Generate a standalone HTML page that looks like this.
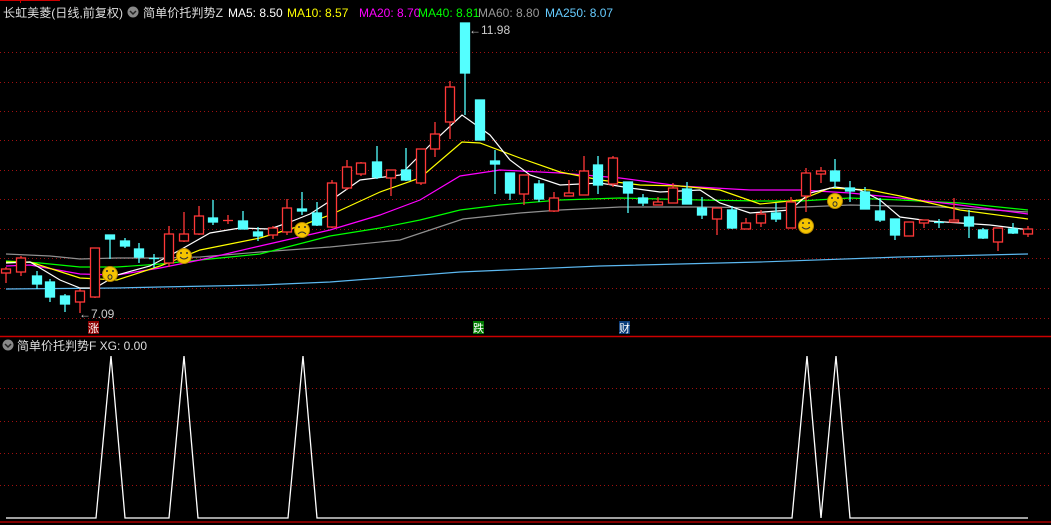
<!DOCTYPE html>
<html><head><meta charset="utf-8"><style>
html,body{margin:0;padding:0;background:#000;width:1051px;height:525px;overflow:hidden}
svg{display:block}
text{font-family:"Liberation Sans","Noto Sans CJK SC",sans-serif}
</style></head><body>
<svg width="1051" height="525" viewBox="0 0 1051 525" xmlns="http://www.w3.org/2000/svg">
<rect width="1051" height="525" fill="#000"/>
<line x1="0" y1="0.5" x2="60" y2="0.5" stroke="#c00" stroke-width="1"/>
<line x1="20.5" y1="0" x2="20.5" y2="3" stroke="#c00"/>
<g stroke="#a01010" stroke-width="1" stroke-dasharray="1,3">
<line x1="0" y1="52.5" x2="1051" y2="52.5"/><line x1="0" y1="82.5" x2="1051" y2="82.5"/>
<line x1="0" y1="111.5" x2="1051" y2="111.5"/><line x1="0" y1="140.5" x2="1051" y2="140.5"/>
<line x1="0" y1="170.5" x2="1051" y2="170.5"/><line x1="0" y1="199.5" x2="1051" y2="199.5"/>
<line x1="0" y1="229.5" x2="1051" y2="229.5"/><line x1="0" y1="258.5" x2="1051" y2="258.5"/>
<line x1="0" y1="288.5" x2="1051" y2="288.5"/><line x1="0" y1="318.5" x2="1051" y2="318.5"/>
<line x1="0" y1="388.5" x2="1051" y2="388.5"/><line x1="0" y1="421.5" x2="1051" y2="421.5"/>
<line x1="0" y1="453.5" x2="1051" y2="453.5"/><line x1="0" y1="485.5" x2="1051" y2="485.5"/>
</g>
<line x1="0" y1="336.5" x2="1051" y2="336.5" stroke="#c00" stroke-width="1.5"/>
<line x1="0" y1="522" x2="1051" y2="522" stroke="#a00" stroke-width="1.5"/>

<text x="3" y="17" font-size="12" fill="#ddd" textLength="120" lengthAdjust="spacingAndGlyphs">长虹美菱(日线,前复权)</text>
<circle cx="133" cy="12" r="5.5" fill="#888"/><path d="M130 11l3 3 3-3" stroke="#222" stroke-width="1.5" fill="none"/>
<text x="143" y="17" font-size="12" fill="#ddd" textLength="80" lengthAdjust="spacingAndGlyphs">简单价托判势Z</text>
<text x="228" y="17" font-size="12" fill="#fff">MA5: 8.50</text>
<text x="287" y="17" font-size="12" fill="#ff0">MA10: 8.57</text>
<text x="359" y="17" font-size="12" fill="#f0f">MA20: 8.70</text>
<text x="418" y="17" font-size="12" fill="#0f0">MA40: 8.81</text>
<text x="478" y="17" font-size="12" fill="#999">MA60: 8.80</text>
<text x="545" y="17" font-size="12" fill="#6cf">MA250: 8.07</text>

<g fill="none" stroke-width="1.2">
<polyline stroke="#5cb8f0" points="6,289 117,288 160,287 260,285 330,282 460,272 600,266 760,262 900,257 1028,254"/>
<polyline stroke="#909090" points="6,254 50,256 80,259 117,258 160,258 200,257 260,252 330,247 400,240 463,219 520,213 560,210 620,207 700,207 780,208 850,205 940,207 1028,212"/>
<polyline stroke="#00ff00" points="6,261 40,263 80,267 117,267 160,264 200,260 260,254 330,236 380,228 420,220 460,210 500,205 560,200 620,198 700,200 760,201 800,201 850,198 900,200 960,203 1028,210"/>
<polyline stroke="#ff00ff" points="6,266 30,265 80,274 117,275 160,268 200,260 260,246 330,230 380,215 420,200 460,176 500,170 560,173 620,178 680,186 750,190 800,190 850,193 900,198 960,205 1028,214"/>
<polyline stroke="#ffff00" points="6,262 30,262 80,278 117,280 160,266 200,250 260,238 300,226 330,215 380,192 420,178 462,142 480,143 520,158 560,172 600,180 640,185 680,186 720,190 760,204 800,200 830,188 870,190 900,196 960,210 1028,219"/>
<polyline stroke="#ffffff" points="6,263 30,262 60,280 80,288 95,288 117,275 150,266 180,250 210,233 240,228 270,229 290,222 310,214 330,201 360,180 400,175 430,145 462,115 490,135 510,160 530,175 560,185 600,183 630,188 660,192 700,190 720,203 750,213 790,210 810,193 835,187 860,190 880,200 900,217 930,221 960,223 990,225 1030,230"/>
</g>

<g stroke="#ff3838" stroke-width="1.3" fill="#000">
<line x1="6" y1="267" x2="6" y2="283"/><rect x="1.5" y="269" width="9" height="4"/>
<line x1="21" y1="256" x2="21" y2="276"/><rect x="16.5" y="258" width="9" height="14"/>
<line x1="80" y1="289" x2="80" y2="313"/><rect x="75.5" y="291" width="9" height="11"/>
<line x1="95" y1="248" x2="95" y2="298"/><rect x="90.5" y="248" width="9" height="49"/>
<line x1="169" y1="226" x2="169" y2="267"/><rect x="164.5" y="234" width="9" height="29"/>
<line x1="184" y1="212" x2="184" y2="242"/><rect x="179.5" y="234" width="9" height="7"/>
<line x1="199" y1="206" x2="199" y2="235"/><rect x="194.5" y="216" width="9" height="18"/>
<line x1="228" y1="215" x2="228" y2="224"/><line x1="223" y1="220.5" x2="233" y2="220.5"/>
<line x1="273" y1="226" x2="273" y2="239"/><rect x="268.5" y="228" width="9" height="7"/>
<line x1="287" y1="199" x2="287" y2="235"/><rect x="282.5" y="208" width="9" height="24"/>
<line x1="332" y1="180" x2="332" y2="228"/><rect x="327.5" y="183" width="9" height="44"/>
<line x1="347" y1="160" x2="347" y2="190"/><rect x="342.5" y="167" width="9" height="21"/>
<line x1="361" y1="162" x2="361" y2="176"/><rect x="356.5" y="163" width="9" height="11"/>
<line x1="391" y1="170" x2="391" y2="196"/><rect x="386.5" y="170" width="9" height="8"/>
<line x1="421" y1="149" x2="421" y2="185"/><rect x="416.5" y="149" width="9" height="34"/>
<line x1="435" y1="122" x2="435" y2="157"/><rect x="430.5" y="134" width="9" height="15"/>
<line x1="450" y1="81" x2="450" y2="139"/><rect x="445.5" y="87" width="9" height="35"/>
<line x1="524" y1="175" x2="524" y2="205"/><rect x="519.5" y="175" width="9" height="19"/>
<line x1="554" y1="192" x2="554" y2="212"/><rect x="549.5" y="198" width="9" height="13"/>
<line x1="569" y1="180" x2="569" y2="196"/><rect x="564.5" y="193" width="9" height="3"/>
<line x1="584" y1="156" x2="584" y2="195"/><rect x="579.5" y="171" width="9" height="24"/>
<line x1="613" y1="156" x2="613" y2="187"/><rect x="608.5" y="158" width="9" height="26"/>
<line x1="658" y1="197" x2="658" y2="205"/><rect x="653.5" y="202" width="9" height="3"/>
<line x1="673" y1="183" x2="673" y2="203"/><rect x="668.5" y="188" width="9" height="15"/>
<line x1="717" y1="208" x2="717" y2="235"/><rect x="712.5" y="208" width="9" height="11"/>
<line x1="746" y1="218" x2="746" y2="229"/><rect x="741.5" y="223" width="9" height="6"/>
<line x1="761" y1="210" x2="761" y2="227"/><rect x="756.5" y="214" width="9" height="9"/>
<line x1="791" y1="197" x2="791" y2="228"/><rect x="786.5" y="202" width="9" height="26"/>
<line x1="806" y1="168" x2="806" y2="212"/><rect x="801.5" y="173" width="9" height="23"/>
<line x1="821" y1="167" x2="821" y2="183"/><rect x="816.5" y="171" width="9" height="3"/>
<rect x="904.5" y="222" width="9" height="14"/>
<line x1="924" y1="220" x2="924" y2="228"/><rect x="919.5" y="220" width="9" height="3"/>
<line x1="954" y1="198" x2="954" y2="222"/><rect x="949.5" y="220" width="9" height="2"/>
<line x1="998" y1="228" x2="998" y2="251"/><rect x="993.5" y="228" width="9" height="14"/>
<line x1="1028" y1="226" x2="1028" y2="237"/><rect x="1023.5" y="229" width="9" height="5"/>
</g>
<g stroke="#54ffff" stroke-width="1.3" fill="#54ffff">
<line x1="37" y1="271" x2="37" y2="289"/><rect x="32.5" y="276" width="9" height="8"/>
<line x1="50" y1="279" x2="50" y2="302"/><rect x="45.5" y="282" width="9" height="15"/>
<line x1="65" y1="294" x2="65" y2="312"/><rect x="60.5" y="296" width="9" height="8"/>
<line x1="110" y1="235" x2="110" y2="259"/><rect x="105.5" y="235" width="9" height="4"/>
<line x1="125" y1="238" x2="125" y2="248"/><rect x="120.5" y="241" width="9" height="5"/>
<line x1="139" y1="243" x2="139" y2="263"/><rect x="134.5" y="249" width="9" height="8"/>
<line x1="154" y1="254" x2="154" y2="268"/><line x1="149" y1="258.5" x2="159" y2="258.5"/>
<line x1="213" y1="200" x2="213" y2="225"/><rect x="208.5" y="218" width="9" height="4"/>
<line x1="243" y1="211" x2="243" y2="229"/><rect x="238.5" y="221" width="9" height="8"/>
<line x1="258" y1="227" x2="258" y2="241"/><rect x="253.5" y="232" width="9" height="4"/>
<line x1="302" y1="192" x2="302" y2="215"/><rect x="297.5" y="209" width="9" height="2"/>
<line x1="317" y1="202" x2="317" y2="226"/><rect x="312.5" y="213" width="9" height="12"/>
<line x1="377" y1="146" x2="377" y2="179"/><rect x="372.5" y="162" width="9" height="15"/>
<line x1="406" y1="148" x2="406" y2="181"/><rect x="401.5" y="170" width="9" height="10"/>
<line x1="465" y1="23" x2="465" y2="115"/><rect x="460.5" y="23" width="9" height="50"/>
<rect x="475.5" y="100" width="9" height="40"/>
<line x1="495" y1="150" x2="495" y2="194"/><rect x="490.5" y="161" width="9" height="3"/>
<line x1="510" y1="173" x2="510" y2="200"/><rect x="505.5" y="173" width="9" height="20"/>
<line x1="539" y1="180" x2="539" y2="202"/><rect x="534.5" y="184" width="9" height="15"/>
<line x1="598" y1="156" x2="598" y2="194"/><rect x="593.5" y="165" width="9" height="20"/>
<line x1="628" y1="182" x2="628" y2="213"/><rect x="623.5" y="182" width="9" height="11"/>
<line x1="643" y1="194" x2="643" y2="206"/><rect x="638.5" y="198" width="9" height="5"/>
<line x1="687" y1="182" x2="687" y2="204"/><rect x="682.5" y="189" width="9" height="15"/>
<line x1="702" y1="197" x2="702" y2="219"/><rect x="697.5" y="208" width="9" height="7"/>
<line x1="732" y1="206" x2="732" y2="229"/><rect x="727.5" y="210" width="9" height="18"/>
<line x1="776" y1="203" x2="776" y2="222"/><rect x="771.5" y="213" width="9" height="6"/>
<line x1="835" y1="159" x2="835" y2="188"/><rect x="830.5" y="171" width="9" height="10"/>
<line x1="850" y1="181" x2="850" y2="202"/><rect x="845.5" y="188" width="9" height="3"/>
<line x1="865" y1="187" x2="865" y2="209"/><rect x="860.5" y="192" width="9" height="17"/>
<line x1="880" y1="198" x2="880" y2="222"/><rect x="875.5" y="211" width="9" height="9"/>
<line x1="895" y1="219" x2="895" y2="240"/><rect x="890.5" y="219" width="9" height="16"/>
<line x1="939" y1="219" x2="939" y2="228"/><line x1="934" y1="222.5" x2="944" y2="222.5"/>
<line x1="969" y1="210" x2="969" y2="238"/><rect x="964.5" y="217" width="9" height="9"/>
<line x1="983" y1="228" x2="983" y2="239"/><rect x="978.5" y="230" width="9" height="8"/>
<line x1="1013" y1="223" x2="1013" y2="234"/><rect x="1008.5" y="229" width="9" height="4"/>
</g>

<text x="469" y="34" font-size="12" fill="#ccc">←11.98</text>
<text x="79" y="318" font-size="12" fill="#ccc">←7.09</text>

<g>
<circle cx="110" cy="274" r="7.5" fill="#f5c400" stroke="#b88a00"/>
<circle cx="107" cy="271" r="1" fill="#333"/><circle cx="113" cy="271" r="1" fill="#333"/><ellipse cx="110" cy="277" rx="2" ry="2.3" fill="none" stroke="#333"/>
<circle cx="184" cy="256" r="7.5" fill="#f5c400" stroke="#b88a00"/>
<circle cx="181" cy="253" r="1" fill="#333"/><circle cx="187" cy="253" r="1" fill="#333"/><path d="M180 257q4 4 8 0" fill="none" stroke="#333"/>
<circle cx="302" cy="230" r="7.5" fill="#f5c400" stroke="#b88a00"/>
<circle cx="299" cy="227" r="1" fill="#333"/><circle cx="305" cy="227" r="1" fill="#333"/><path d="M298 234q4 -4 8 0" fill="none" stroke="#333"/>
<circle cx="806" cy="226" r="7.5" fill="#f5c400" stroke="#b88a00"/>
<circle cx="803" cy="223" r="1" fill="#333"/><circle cx="809" cy="223" r="1" fill="#333"/><path d="M802 227q4 4 8 0" fill="none" stroke="#333"/>
<circle cx="835" cy="201" r="7.5" fill="#f5c400" stroke="#b88a00"/>
<circle cx="832" cy="198" r="1" fill="#333"/><circle cx="838" cy="198" r="1" fill="#333"/><ellipse cx="835" cy="204" rx="2" ry="2.3" fill="none" stroke="#333"/>
</g>

<rect x="88" y="321" width="11" height="13" fill="#8b0000"/><text x="88" y="332" font-size="11" fill="#fff">涨</text>
<rect x="473" y="321" width="11" height="13" fill="#007a00"/><text x="473" y="332" font-size="11" fill="#fff">跌</text>
<rect x="619" y="321" width="11" height="13" fill="#0a3c7a"/><text x="619" y="332" font-size="11" fill="#fff">财</text>

<circle cx="8" cy="345" r="5.5" fill="#888"/><path d="M5 344l3 3 3-3" stroke="#222" stroke-width="1.5" fill="none"/>
<text x="17" y="350" font-size="12" fill="#ddd">简单价托判势F  XG: 0.00</text>
<polyline fill="none" stroke="#fff" stroke-width="1.3" points="6,518 96,518 111,356 125,518 169,518 184,356 198,518 288,518 303,356 317,518 792,518 807,356 821,518 836,356 850,518 1028,518"/>
</svg>
</body></html>
